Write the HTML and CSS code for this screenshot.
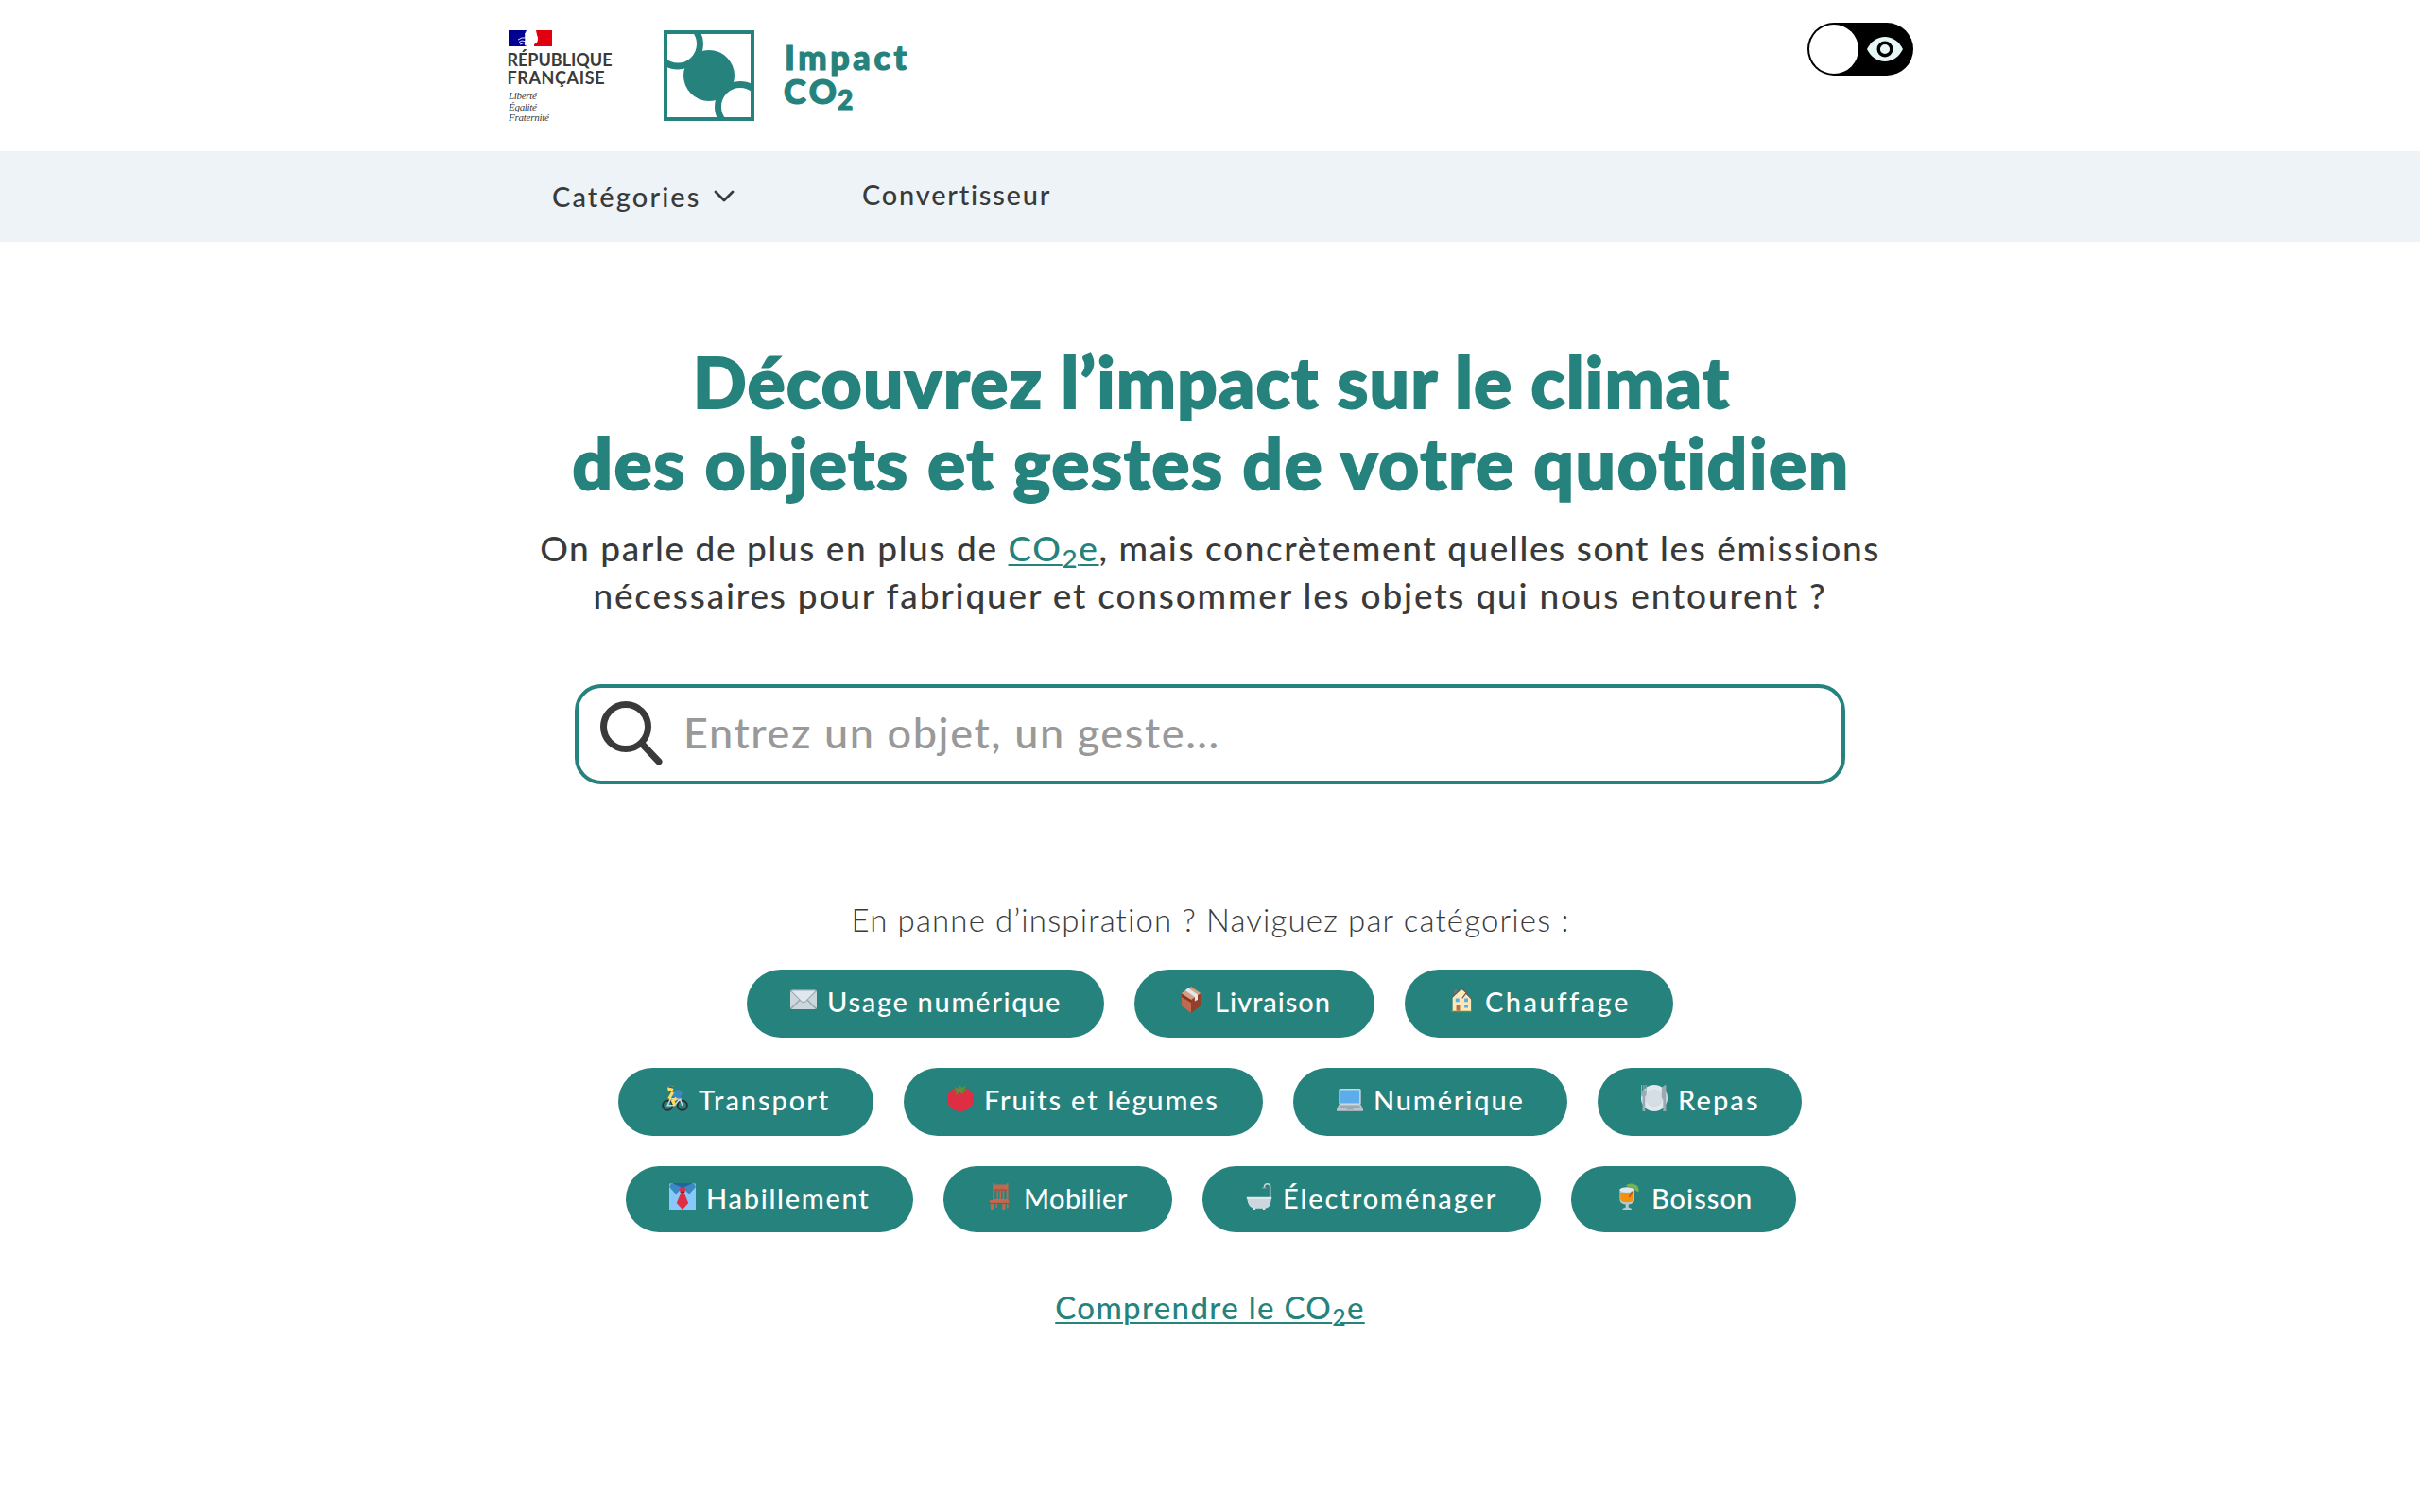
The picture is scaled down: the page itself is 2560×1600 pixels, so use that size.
FILE: index.html
```html
<!DOCTYPE html>
<html lang="fr">
<head>
<meta charset="utf-8">
<title>Impact CO2</title>
<link rel="stylesheet" href="styles.css">
</head>
<body>
<header class="header">
  <div class="header-inner">
    <svg class="brand" viewBox="530 20 440 120" role="img" aria-label="République Française, Impact CO2">
      <path fill="#000091" d="M538 32h19l-2 4 1 4-1 4 2 5h-19z"/>
      <path fill="#e1000f" d="M567 32h17v17h-20l2-3 2-1 1-3-1-5z"/>
      <path fill="#fff" d="M558 33c3-2 7-1 9 2l2 5-1 4-3 1v4h-7l-3-1 1-5-1-4z"/>
      <path fill="none" stroke="#fff" stroke-width=".9" d="M548 42l4-2h5M549 44.500l3-1.500 5 1M550 47l4-1.500 3 1.500"/>
      <g class="rf">
        <text x="536.500" y="70" textLength="111">RÉPUBLIQUE</text>
        <text x="536.500" y="88.500" textLength="103">FRANÇAISE</text>
      </g>
      <g class="motto">
        <text x="538" y="105" textLength="30">Liberté</text>
        <text x="538" y="116.500" textLength="30">Égalité</text>
        <text x="538" y="128" textLength="43">Fraternité</text>
      </g>
      <clipPath id="frame"><rect x="704" y="34" width="92" height="92"/></clipPath>
      <g clip-path="url(#frame)" stroke="#26827c" stroke-width="7">
        <circle cx="750" cy="80" r="27" fill="#26827c" stroke="none"/>
        <circle cx="717" cy="46.500" r="23.500" fill="#fff"/>
        <circle cx="783" cy="113" r="23.500" fill="#fff"/>
      </g>
      <rect x="704" y="34" width="92" height="92" fill="none" stroke="#26827c" stroke-width="4"/>
      <g class="product">
        <text x="830" y="74" textLength="129">Impact</text>
        <text x="829" y="110" textLength="56">CO</text>
        <text class="product-sub" x="886" y="116">2</text>
      </g>
    </svg>
    <button class="toggle" aria-label="Mode sombre">
      <span class="knob"></span>
      <svg class="eye" viewBox="0 0 38 26"><path fill="#e6f7f6" d="M0 13C4 5 11 0 19 0s15 5 19 13c-4 8-11 13-19 13S4 21 0 13z"/><circle cx="19" cy="13" r="6.800" fill="#e6f7f6" stroke="#000" stroke-width="3.400"/></svg>
    </button>
  </div>
</header>
<nav class="nav">
  <div class="nav-inner">
    <a class="nav-item nav-cat">Catégories<svg class="chevron" viewBox="0 0 22 13"><path d="M2 2l9 9 9-9"/></svg></a>
    <a class="nav-item nav-conv">Convertisseur</a>
  </div>
</nav>
<main class="main">
  <h1 class="title"><span class="title-a">Découvrez l’impact sur le climat</span><span class="title-b">des objets et gestes de votre quotidien</span></h1>
  <p class="intro"><span class="intro-a">On parle de plus en plus de <a class="link">CO<sub>2</sub>e</a>, mais concrètement quelles sont les émissions</span><span class="intro-b">nécessaires pour fabriquer et consommer les objets qui nous entourent ?</span></p>
  <div class="search">
    <svg class="loupe" viewBox="0 0 66 68"><circle cx="27" cy="27" r="23.500"/><path d="M44 45l18 19"/></svg>
    <span class="placeholder">Entrez un objet, un geste...</span>
  </div>
  <p class="hint">En panne d’inspiration ? Naviguez par catégories :</p>
  <div class="pills">
    <div class="row">
      <a class="pill usage"><svg class="ico" viewBox="0 0 36 36"><rect y="5" width="36" height="26" rx="3" fill="#ccd6dd"/><path d="M1 30l12-12M35 30L23 18" stroke="#99aab5" stroke-width="2"/><path d="M1 6l14 14q3 3 6 0L35 6q-1-1-2-1H3Q2 5 1 6z" fill="#e1e8ed" stroke="#99aab5" stroke-width="1.500"/></svg><span>Usage numérique</span></a>
      <a class="pill livraison"><svg class="ico" viewBox="0 0 36 36"><path fill="#c1694f" d="M5 9L18 17v19L5 26z"/><path fill="#933f2a" d="M31 9L18 17v19l13-10z"/><path fill="#d99e82" d="M18 0l13 9-13 9L5 9z"/><path fill="#e1e8ed" d="M10 5l4-3 13 9v7l-4 2v-6z"/><path fill="#853522" d="M5 10l13 8v4L5 14z"/></svg><span>Livraison</span></a>
      <a class="pill chauffage"><svg class="ico" viewBox="0 0 36 36"><path fill="#5c913b" d="M4 32h28v3H4z"/><path fill="#66757f" d="M8 4h4v9H8z"/><path fill="#ffe8b6" d="M6 14L18 3l13 12v18H6z"/><path d="M5 15L18 3l7 5-6 8M24 9l8 8" fill="none" stroke="#66595a" stroke-width="1.500"/><path fill="#c1694f" d="M11 25h5v8h-5z"/><path fill="#55acee" d="M10 16h5v5h-5zM22 16h5v5h-5zM22 25h5v4h-5z"/></svg><span>Chauffage</span></a>
    </div>
    <div class="row">
      <a class="pill transport"><svg class="ico" viewBox="0 0 36 36"><g fill="none" stroke="#292f33" stroke-width="2.500"><circle cx="8" cy="28" r="6.500"/><circle cx="28" cy="28" r="6.500"/></g><path d="M8 28l4-9h13l-8 9zM25 19l3 9" fill="none" stroke="#ccd6dd" stroke-width="2"/><path fill="#3b88c3" d="M14 9l10-3 4 5-3 8-6-1-6-4z"/><path d="M15 10l-5 9M20 18l-5 4 3 6" stroke="#ffdc5d" stroke-width="4" fill="none"/><circle cx="12" cy="5" r="4" fill="#ffdc5d"/><path fill="#226699" d="M8 3q3-4 8 0l1 2z"/></svg><span>Transport</span></a>
      <a class="pill fruits"><svg class="ico" viewBox="0 0 36 36"><path fill="#dd2e44" d="M18 5C8 2 0 9 0 19c0 11 8 17 18 17s18-6 18-17C36 9 28 2 18 5z"/><path fill="#5c913b" d="M9 3l7 2 1-5 3 4 6-3-3 5 6 2-8 1 1 4-5-3-6 4 2-5-6-1 5-2z"/></svg><span>Fruits et légumes</span></a>
      <a class="pill numerique"><svg class="ico" viewBox="0 0 36 36"><rect x="3" y="5" width="30" height="22" rx="2" fill="#ccd6dd"/><path fill="#5dadec" d="M5 7h26v18H5z"/><path fill="#b8c5cd" d="M3 27h30l3 6v3H0v-3z"/><path fill="#99aab5" d="M5 28h26l1 3H4zM14 32h8l1 2H13zM0 35h36v1H0z"/></svg><span>Numérique</span></a>
      <a class="pill repas"><svg class="ico" viewBox="0 0 36 36"><circle cx="18" cy="18" r="18" fill="#e1e8ed"/><circle cx="18" cy="18" r="11" fill="#d5dee4" stroke="#ccd6dd"/><path fill="#99aab5" d="M0 0h1.500v9H3V0h1.500v9H6V0h1.500v11q0 4-2 5v20H2V16q-2-1-2-5zM30 36V20l-2-3V6q1-5 6-6v36z"/></svg><span>Repas</span></a>
    </div>
    <div class="row row-last">
      <a class="pill habillement"><svg class="ico" viewBox="0 0 36 36"><path fill="#88c9f9" d="M0 3q0-3 3-3h30q3 0 3 3v33H0z"/><path fill="#226699" d="M4 0h28l-6 5H10z"/><path fill="#3b88c3" d="M3 0l15 6-9 9L0 5zM33 0L18 6l9 9 9-10z"/><path fill="#dd2e44" d="M15 5h6l1 5-2 3 6 14-8 9-8-9 6-14-2-3z"/><path stroke="#a0041e" stroke-width="1.500" d="M15 12h6"/></svg><span>Habillement</span></a>
      <a class="pill mobilier"><svg class="ico" viewBox="0 0 36 36"><path fill="#c1694f" d="M8 0h2v2h17V0h2v24H8zM4 23h26v5H4zM5 28h4v8H5zM21 28h4v8h-4zM12 28h2v5h-2zM27 28h2v6h-2z"/><path fill="#26827c" d="M10.500 10h3v12h-3zM15.300 10h2v12h-2zM19.500 10h2v12h-2zM23.500 10h3v12h-3z"/><path stroke="#933f2a" d="M4 27.500h26M10 9h17"/></svg><span>Mobilier</span></a>
      <a class="pill electromenager"><svg class="ico" viewBox="0 0 36 36"><path d="M33 20V5q0-4-4-4-4 0-4 5" fill="none" stroke="#ccd6dd" stroke-width="2"/><path fill="#99aab5" d="M21 7q4-4 8 0z"/><path fill="#e1e8ed" d="M1 19h34v3h-1q0 12-8 12v2h-3v-2H13v2h-3v-2Q3 32 2 22L1 21z"/><path fill="#ccd6dd" d="M2 22h32q0 12-9 12H12Q4 33 2 22z"/></svg><span>Électroménager</span></a>
      <a class="pill boisson"><svg class="ico" viewBox="0 0 36 36"><path fill="#b7c9d3" d="M7 8h20v14q0 6-8 7v4l4 1.500v1.500H11v-1.500l4-1.500v-4q-8-1-8-7z"/><path fill="#f4900c" d="M8 13h18v8q0 5-9 5t-9-5z"/><ellipse cx="17" cy="9" rx="10" ry="3.500" fill="#e1e8ed"/><path fill="#77b255" d="M15 3q7-4 12-1 6 0 6 10-5-1-7-5-6 0-11-4z"/><path stroke="#be4b19" stroke-width="2" d="M24 11l-4 8"/></svg><span>Boisson</span></a>
    </div>
  </div>
  <a class="link more">Comprendre le CO<sub>2</sub>e</a>
</main>
</body>
</html>
```
FILE: styles.css
```css
* { box-sizing: border-box; }
body { margin: 0; background: #fff; color: #3a3a3a; font-family: Lato, "Open Sans", sans-serif; font-weight: 500; }
h1, p { margin: 0; }

.header { height: 160px; }
.header-inner { width: 1500px; margin: 0 auto; padding: 20px 6px 0 0; display: flex; justify-content: space-between; align-items: flex-start; }
.brand { width: 440px; height: 120px; display: block; }
.rf { font-size: 18px; font-weight: 700; fill: #3a3a3a; }
.motto { font: italic 11px "Liberation Serif", serif; fill: #3a3a3a; }
.product { font-size: 36px; font-weight: 900; fill: #26827c; stroke: #26827c; stroke-width: 1.2px; }
.product-sub { font-size: 28px; }
.toggle { margin: 4px 0 0; width: 112px; height: 56px; padding: 2px 11px 2px 2px; border: 0; border-radius: 28px; background: #000; display: flex; align-items: center; justify-content: space-between; }
.knob { width: 52px; height: 52px; border-radius: 50%; background: #fff; }
.eye { width: 38px; height: 26px; }

.nav { height: 96px; background: #eef3f7; }
.nav-inner { width: 1394px; height: 96px; margin: 0 auto; display: flex; align-items: center; font-size: 29px; }
.nav-cat { width: 328px; padding: 0 0 2px 1px; letter-spacing: 2.1px; display: flex; align-items: center; }
.nav-conv { padding: 0 0 6px 1px; letter-spacing: 1.77px; }
.chevron { width: 22px; height: 13px; margin-left: 14px; fill: none; stroke: #3a3a3a; stroke-width: 2.8; stroke-linecap: round; stroke-linejoin: round; }

.main { padding-top: 104px; display: flex; flex-direction: column; align-items: center; }
.title { font-size: 75px; line-height: 86px; font-weight: 900; color: #26827c; -webkit-text-stroke: 1.8px #26827c; text-align: center; white-space: nowrap; }
.title span, .intro > span { display: block; }
.title-a { padding-left: 3px; letter-spacing: 1.1px; }
.title-b { padding-left: 2px; letter-spacing: 1.55px; }
.intro { margin-top: 23px; font-size: 37px; line-height: 50px; text-align: center; white-space: nowrap; }
.intro-a { letter-spacing: 1.6px; }
.intro-b { letter-spacing: 1.81px; }
.link { color: #26827c; text-decoration: underline; text-decoration-thickness: 2px; text-underline-offset: 3px; }
.link sub { font-size: 75%; line-height: 0; vertical-align: -7px; }

.search { width: 1344px; height: 106px; margin-top: 69px; border: 4px solid #26827c; border-radius: 28px; display: flex; align-items: flex-start; padding: 14px 0 0 23px; }
.loupe { width: 66px; height: 68px; fill: none; stroke: #3a3a3a; stroke-width: 7; stroke-linecap: round; }
.placeholder { margin-left: 22px; font-size: 45px; line-height: 67px; letter-spacing: 1.6px; color: #999; }

.hint { margin-top: 119px; padding-left: 1px; font-size: 33px; line-height: 48px; font-weight: 300; letter-spacing: 1.15px; }
.pills { margin-top: 29px; display: flex; flex-direction: column; gap: 32px; }
.row { display: flex; justify-content: center; gap: 32px; height: 72px; }
.row-last { height: 70px; padding-left: 2px; }
.pill { display: flex; align-items: flex-start; gap: 11px; padding-left: 46px; border-radius: 36px; background: #26827c; color: #fff; font-size: 29px; line-height: 67px; white-space: nowrap; }
.ico { width: 28px; height: 28px; margin-top: 18px; flex: none; }
.usage { width: 378px; letter-spacing: 1.7px; }
.livraison { width: 254px; letter-spacing: .95px; }
.chauffage { width: 284px; letter-spacing: 2.5px; }
.transport { width: 270px; letter-spacing: 1.95px; }
.fruits { width: 380px; letter-spacing: 1.8px; }
.numerique { width: 290px; letter-spacing: 1.85px; }
.repas { width: 216px; letter-spacing: 2.1px; }
.habillement { width: 304px; letter-spacing: 1.7px; }
.mobilier { width: 242px; letter-spacing: .41px; }
.electromenager { width: 358px; letter-spacing: 1.89px; }
.boisson { width: 238px; letter-spacing: 1px; }
.more { margin-top: 55px; font-size: 33px; line-height: 48px; letter-spacing: 1.36px; }
```
